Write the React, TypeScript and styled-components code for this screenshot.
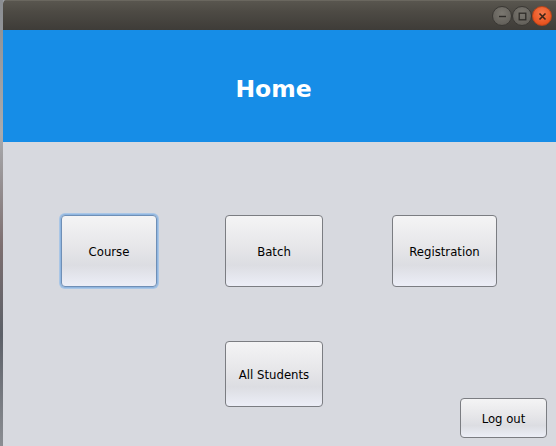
import React from "react";
import styled, { createGlobalStyle, css } from "styled-components";

const Global = createGlobalStyle`
  html, body { margin: 0; padding: 0; width: 556px; height: 446px; overflow: hidden; }
  body { font-family: "DejaVu Sans", Verdana, sans-serif; background: #9a9ea4; }
`;

const Screen = styled.div`
  display: flex;
  width: 556px;
  height: 446px;
`;

const Desktop = styled.div`
  width: 3px;
  flex: none;
  background: linear-gradient(180deg, #8a8d92 0%, #a9abae 30%, #7d6f70 55%, #5c6068 75%, #8b8e93 100%);
`;

const Window = styled.div`
  flex: 1;
  display: flex;
  flex-direction: column;
  background: #d7d9df;
  border-top-left-radius: 4px;
  overflow: hidden;
`;

const TitleBar = styled.div`
  height: 30px;
  flex: none;
  display: flex;
  align-items: center;
  justify-content: flex-end;
  gap: 0px;
  padding-right: 4px;
  background: linear-gradient(180deg, #5a5750 0%, #4d4a44 40%, #3e3c38 100%);
  box-shadow: inset 0 1px 0 #6a675f;
`;

const Ctl = styled.div<{ $close?: boolean }>`
  width: 18px;
  height: 18px;
  border-radius: 50%;
  display: flex;
  align-items: center;
  justify-content: center;
  margin-top: 2px;
  ${(p) =>
    p.$close
      ? css`
          background: radial-gradient(circle at 50% 35%, #f47a4c 0%, #e95420 70%, #c9461a 100%);
          border: 1px solid #b8441a;
        `
      : css`
          background: radial-gradient(circle at 50% 35%, #7a7770 0%, #65625c 70%, #55524c 100%);
          border: 1px solid #3a3834;
        `}
`;

const Header = styled.div`
  height: 112px;
  flex: none;
  box-sizing: border-box;
  background: #168de7;
  display: flex;
  align-items: center;
  justify-content: center;
  padding: 8px 12px 0 0;
`;

const Title = styled.h1`
  margin: 0;
  color: #ffffff;
  font-family: "DejaVu Sans", sans-serif;
  font-weight: bold;
  font-size: 23.5px;
  line-height: 1;
`;

const Content = styled.div`
  flex: 1;
  display: flex;
  flex-direction: column;
  padding-top: 73px;
  gap: 54px;
`;

const Row = styled.div<{ $pl: number }>`
  display: flex;
  align-items: flex-start;
  padding-left: ${(p) => p.$pl}px;
`;

const Btn = styled.button<{ $w: number; $h: number; $ml?: number; $mt?: number; $focus?: boolean }>`
  width: ${(p) => p.$w}px;
  height: ${(p) => p.$h}px;
  margin-left: ${(p) => p.$ml ?? 0}px;
  margin-top: ${(p) => p.$mt ?? 0}px;
  flex: none;
  box-sizing: border-box;
  border: 1px solid #7b7d82;
  border-radius: 4px;
  background: linear-gradient(180deg, #f4f4f5 0%, #e6e6e9 45%, #dcdde2 70%, #eceef7 100%);
  font-family: "DejaVu Sans", sans-serif;
  font-size: 11.7px;
  color: #000;
  padding: 2px 0 0 0;
  cursor: default;
  ${(p) =>
    p.$focus &&
    css`
      border-color: #6f8fb6;
      box-shadow: 0 0 0 1px #90b6e0, 0 0 0 2px #a9c6e6;
    `}
`;

const X = () => (
  <svg width="9" height="9" viewBox="0 0 9 9">
    <path d="M1.5 1.5 L7.5 7.5 M7.5 1.5 L1.5 7.5" stroke="#3a2418" strokeWidth="1.6" />
  </svg>
);
const Min = () => (
  <svg width="9" height="9" viewBox="0 0 9 9">
    <path d="M1 4.5 H8" stroke="#2e2c29" strokeWidth="1.4" />
  </svg>
);
const Max = () => (
  <svg width="9" height="9" viewBox="0 0 9 9">
    <rect x="1.2" y="1.2" width="6.6" height="6.6" fill="none" stroke="#2e2c29" strokeWidth="1.3" />
  </svg>
);

export default function App() {
  return (
    <>
      <Global />
      <Screen>
        <Desktop />
        <Window>
          <TitleBar>
            <Ctl><Min /></Ctl>
            <Ctl><Max /></Ctl>
            <Ctl $close><X /></Ctl>
          </TitleBar>
          <Header>
            <Title>Home</Title>
          </Header>
          <Content>
            <Row $pl={58}>
              <Btn $w={96} $h={72} $focus>Course</Btn>
              <Btn $w={98} $h={72} $ml={68}>Batch</Btn>
              <Btn $w={105} $h={72} $ml={69}>Registration</Btn>
            </Row>
            <Row $pl={222}>
              <Btn $w={98} $h={66}>All Students</Btn>
              <Btn $w={87} $h={40} $ml={137} $mt={57}>Log out</Btn>
            </Row>
          </Content>
        </Window>
      </Screen>
    </>
  );
}
